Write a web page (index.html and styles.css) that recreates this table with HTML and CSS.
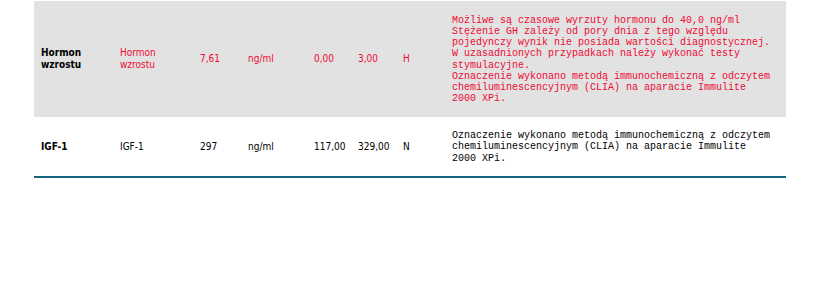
FILE: index.html
```html
<!DOCTYPE html>
<html lang="pl">
<head>
<meta charset="utf-8">
<link rel="stylesheet" href="styles.css">
</head>
<body>
<table class="results">
  <colgroup>
    <col class="c-name"><col class="c-name2"><col class="c-val"><col class="c-unit"><col class="c-min"><col class="c-max"><col class="c-flag"><col class="c-note">
  </colgroup>
  <tr class="row row-alt abnormal">
    <td class="name">Hormon<br>wzrostu</td>
    <td>Hormon<br>wzrostu</td>
    <td>7,61</td>
    <td>ng/ml</td>
    <td>0,00</td>
    <td>3,00</td>
    <td>H</td>
    <td class="note">Możliwe są czasowe wyrzuty hormonu do 40,0 ng/ml<br>Stężenie GH zależy od pory dnia z tego względu<br>pojedynczy wynik nie posiada wartości diagnostycznej.<br>W uzasadnionych przypadkach należy wykonać testy<br>stymulacyjne.<br>Oznaczenie wykonano metodą immunochemiczną z odczytem<br>chemiluminescencyjnym (CLIA) na aparacie Immulite<br>2000 XPi.</td>
  </tr>
  <tr class="row row-last">
    <td class="name">IGF-1</td>
    <td>IGF-1</td>
    <td>297</td>
    <td>ng/ml</td>
    <td>117,00</td>
    <td>329,00</td>
    <td>N</td>
    <td class="note">Oznaczenie wykonano metodą immunochemiczną z odczytem<br>chemiluminescencyjnym (CLIA) na aparacie Immulite<br>2000 XPi.</td>
  </tr>
</table>
</body>
</html>
```

FILE: styles.css
```css
html, body {
  margin: 0;
  padding: 0;
  background: #ffffff;
}
body {
  padding-top: 1px;
  font-family: "DejaVu Sans Condensed", "DejaVu Sans", Verdana, sans-serif;
  font-size: 10px;
  color: #000;
}
.results {
  margin-left: 34px;
  width: 752px;
  border-collapse: collapse;
  table-layout: fixed;
  border-bottom: 2px solid #16627f;
}
.c-name { width: 79px; }
.c-name2 { width: 80px; }
.c-val { width: 48px; }
.c-unit { width: 66px; }
.c-min { width: 44px; }
.c-max { width: 45px; }
.c-flag { width: 49px; }
.c-note { width: 341px; }
.results td {
  padding: 0 0 0 7px;
  vertical-align: middle;
  line-height: 12px;
  white-space: nowrap;
}
.row-alt { background: #e2e2e2; height: 116px; }
.row-last { height: 60px; }
.abnormal td { color: #ee0a32; }
.abnormal td.name { color: #000; }
.results td.name { font-weight: bold; }
.results td.note {
  font-family: "Liberation Mono", "Courier New", monospace;
  font-size: 10px;
  line-height: 11.2px;
  padding-top: 1px;
}
```
